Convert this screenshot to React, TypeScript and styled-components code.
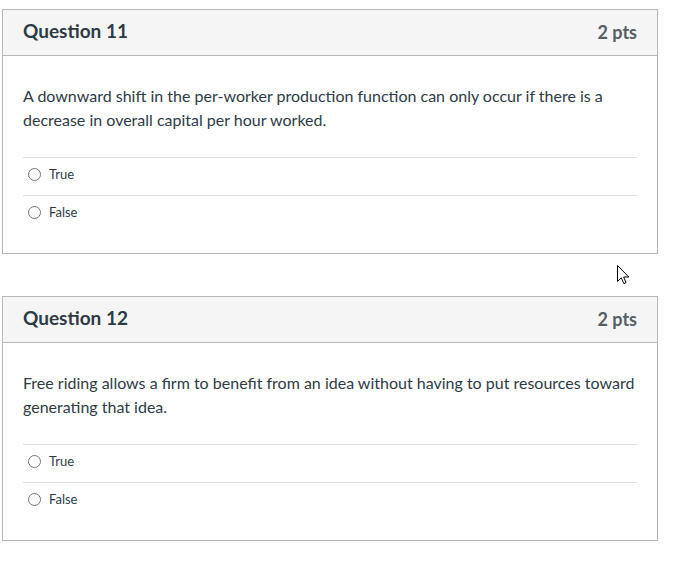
import React from 'react';
import styled, { createGlobalStyle } from 'styled-components';

const GlobalStyle = createGlobalStyle`
  body {
    margin: 0;
    background: #ffffff;
    font-family: Lato, "Open Sans", sans-serif;
    color: #2d3b45;
  }
`;

const Page = styled.main`
  position: relative;
  width: 674px;
  height: 565px;
  padding: 9px 0 0 2px;
  box-sizing: border-box;
  display: flex;
  flex-direction: column;
  gap: 42px;
`;

const Card = styled.section`
  width: 656px;
  box-sizing: border-box;
  border: 1px solid #b4b8bb;
  background: #fff;
`;

const Header = styled.header`
  height: 46px;
  box-sizing: border-box;
  display: flex;
  align-items: center;
  justify-content: space-between;
  padding: 0 20px 4px;
  background: #f5f5f5;
  border-bottom: 1px solid #b4b8bb;
`;

const Title = styled.h2`
  margin: 0;
  font-size: 19px;
  font-weight: 700;
  color: #2d3b45;
`;

const Points = styled.span`
  font-size: 18px;
  font-weight: 700;
  color: #555f66;
  padding-top: 2px;
`;

const Body = styled.div`
  padding: 28px 20px 20px;
`;

const Prompt = styled.p`
  margin: 0 0 25px;
  font-size: 16px;
  line-height: 24px;
  color: #2d3b45;
`;

const Answers = styled.ul`
  list-style: none;
  margin: 0;
  padding: 0;
`;

const Answer = styled.li`
  height: 38px;
  display: flex;
  align-items: flex-start;
  padding: 8px 0 0 5px;
  border-top: 1px solid #dcdedf;
  box-sizing: border-box;
`;

const Choice = styled.label`
  display: flex;
  align-items: center;
  gap: 8px;
  height: 16px;
  font-size: 13px;
  line-height: 16px;
  color: #2d3b45;
`;

const Radio = styled.span`
  width: 11px;
  height: 11px;
  border: 1px solid #6f7477;
  border-radius: 50%;
  background: #fff;
  flex: none;
`;

const Cursor = styled.svg`
  position: absolute;
  left: 617px;
  top: 265px;
`;

const questions = [
  {
    title: 'Question 11',
    points: '2 pts',
    prompt:
      'A downward shift in the per-worker production function can only occur if there is a decrease in overall capital per hour worked.',
  },
  {
    title: 'Question 12',
    points: '2 pts',
    prompt:
      'Free riding allows a firm to benefit from an idea without having to put resources toward generating that idea.',
  },
];

const App = () => (
  <>
    <GlobalStyle />
    <Page>
      {questions.map(q => (
        <Card key={q.title}>
          <Header>
            <Title>{q.title}</Title>
            <Points>{q.points}</Points>
          </Header>
          <Body>
            <Prompt>{q.prompt}</Prompt>
            <Answers>
              {['True', 'False'].map(label => (
                <Answer key={label}>
                  <Choice>
                    <Radio />
                    {label}
                  </Choice>
                </Answer>
              ))}
            </Answers>
          </Body>
        </Card>
      ))}
      <Cursor width="13" height="21" viewBox="0 0 13 21">
        <path
          d="M0.5 0.5 L0.5 16.5 L4.3 12.8 L6.8 18.6 L9 17.6 L6.6 12 L11.8 12 Z"
          fill="#fff"
          stroke="#000"
          strokeWidth="1"
          strokeLinejoin="round"
        />
      </Cursor>
    </Page>
  </>
);

export default App;
